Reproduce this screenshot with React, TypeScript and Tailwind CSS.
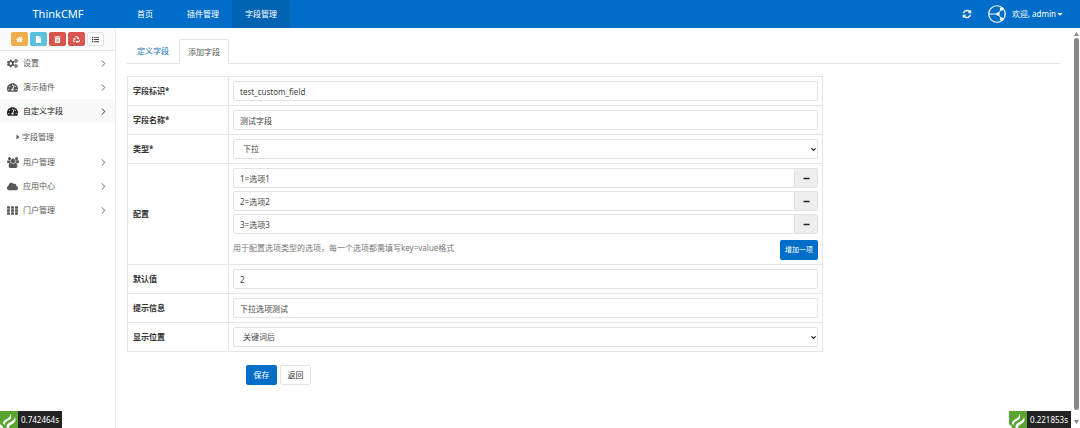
import { useState } from "react"
import type { ReactNode } from "react"
import {
  FaCaretDown,
  FaCaretRight,
  FaCloud,
  FaCogs,
  FaFile,
  FaHome,
  FaList,
  FaMinus,
  FaRecycle,
  FaTachometerAlt,
  FaTrashAlt,
} from "react-icons/fa"
import { ChevronDown, ChevronRight } from "lucide-react"

const navItems = ["首页", "插件管理", "字段管理"]

const shortcuts = [
  { label: "网站首页", icon: <FaHome />, style: "border-[#f0ad4e] bg-[#f0ad4e] text-white" },
  { label: "文章", icon: <FaFile />, style: "border-[#5bc0de] bg-[#5bc0de] text-white" },
  { label: "清除缓存", icon: <FaTrashAlt />, style: "border-[#d9534f] bg-[#d9534f] text-white" },
  { label: "回收站", icon: <FaRecycle />, style: "border-[#d9534f] bg-[#d9534f] text-white" },
  { label: "列表", icon: <FaList />, style: "border-[#e4e4e4] bg-white text-[#333]" },
]

const inputClass =
  "h-5 w-full min-w-0 rounded-[2px] border border-[#e2e2e2] bg-white px-1.5 text-[8px] text-[#444] outline-none focus:border-[#66afe9]"

function UsersIcon() {
  return (
    <svg viewBox="0 0 1920 1792" fill="currentColor" className="h-[11px] w-3">
      <path d="M593 896q-162 5-265 128h-134q-82 0-138-40.5t-56-118.5q0-353 124-353 6 0 43.5 21t97.5 42.5 119 21.5q67 0 133-23-5 37-5 66 0 159 92 288zm1071 637q0 120-73 189.5t-194 69.5h-874q-121 0-194-69.5t-73-189.5q0-53 3.5-103.5t14-109 26.5-108.5 43-97.5 62-81 85.5-53.5 111.5-20q10 0 43 21.5t73 48 107 48 135 21.5 135-21.5 107-48 73-48 43-21.5q61 0 111.5 20t85.5 53.5 62 81 43 97.5 26.5 108.5 14 109 3.5 103.5zm-1024-1277q0 106-75 181t-181 75-181-75-75-181 75-181 181-75 181 75 75 181zm704 384q0 159-112.5 271.5t-271.5 112.5-271.5-112.5-112.5-271.5 112.5-271.5 271.5-112.5 271.5 112.5 112.5 271.5zm576 225q0 78-56 118.5t-138 40.5h-134q-103-123-265-128 92-129 92-288 0-29-5-66 66 23 133 23 59 0 119-21.5t97.5-42.5 43.5-21q124 0 124 353zm-128-609q0 106-75 181t-181 75-181-75-75-181 75-181 181-75 181 75 75 181z" />
    </svg>
  )
}

function GridIcon() {
  return (
    <svg viewBox="0 0 22 17" fill="currentColor" className="h-[9px] w-[11px]">
      {[0, 6, 12].map((y) =>
        [0, 8, 16].map((x) => <rect key={`${x}-${y}`} x={x} y={y} width="6" height="5" rx="1" />)
      )}
    </svg>
  )
}

function RefreshIcon() {
  return (
    <svg viewBox="0 0 1792 1792" fill="currentColor" className="size-[10px]">
      <path d="M1639 1056q0 5-1 7-64 268-268 434.5t-478 166.5q-146 0-282.5-55t-243.5-157l-129 129q-19 19-45 19t-45-19-19-45v-448q0-26 19-45t45-19h448q26 0 45 19t19 45-19 45l-137 137q71 66 161 102t187 36q134 0 250-65t186-179q11-17 53-117 8-23 30-23h192q13 0 22.5 9.5t9.5 22.5zm25-800v448q0 26-19 45t-45 19h-448q-26 0-45-19t-19-45 19-45l138-138q-148-137-349-137-134 0-250 65t-186 179q-11 17-53 117-8 23-30 23h-199q-13 0-22.5-9.5t-9.5-22.5v-7q65-268 270-434.5t480-166.5q146 0 284 55.5t245 156.5l130-129q19-19 45-19t45 19 19 45z" />
    </svg>
  )
}

function AvatarIcon() {
  return (
    <svg viewBox="0 0 36 36" fill="none" stroke="currentColor" className="size-[18px]">
      <circle cx="18" cy="18" r="16.5" strokeWidth="2.4" />
      <path d="M2 18h18M20 18l7-10M20 18l7 10" strokeWidth="2" />
      <circle cx="20" cy="18" r="3.4" fill="currentColor" stroke="none" />
      <circle cx="27" cy="8" r="3.4" fill="currentColor" stroke="none" />
      <circle cx="27" cy="28" r="3.4" fill="currentColor" stroke="none" />
    </svg>
  )
}

function TraceBadge({ time }: { time: string }) {
  return (
    <button type="button" className="flex h-[17px] items-stretch bg-[#232323] text-[8px] text-white">
      <svg viewBox="0 0 36 34" className="h-[17px] w-[18px] bg-[#5aa532]">
        <path d="M6 23c3-7 14-7 15-17 5 9-3 12-8 15-3 2-4 4-3 7-3-1-4-3-4-5z" fill="#fff" />
        <path d="M13 30c2-8 15-8 17-18 4 10-4 13-9 16-2 1-3 3-3 6h-4c-1-1-1-3-1-4z" fill="#fff" />
        <path d="M0 27c3 0 6 3 6 7H0z" fill="#fff" />
      </svg>
      <span className="px-[3px] leading-[17px]">{time}</span>
    </button>
  )
}

function MenuItem({ icon, label, active }: { icon: ReactNode; label: string; active?: boolean }) {
  return (
    <li>
      <a
        href="#"
        className={`flex h-6 items-center pr-1.5 pl-[7px] ${active ? "bg-[#f9f9f9] text-[#222]" : "text-[#585858]"}`}
      >
        <span className="flex w-4 text-[11px]">{icon}</span>
        <span className="grow">{label}</span>
        <ChevronRight className="size-[11px]" strokeWidth={2} />
      </a>
    </li>
  )
}

function Field({ id, label, children }: { id: string; label: string; children: ReactNode }) {
  return (
    <tr>
      <th scope="row" className="w-[101px] border border-[#e5e5e5] px-[5px] text-left font-bold text-[#333]">
        <label htmlFor={id}>{label}</label>
      </th>
      <td className="border border-[#e5e5e5] p-1">{children}</td>
    </tr>
  )
}

function Select({ id, options }: { id: string; options: string[] }) {
  return (
    <div className="relative">
      <select id={id} className={`${inputClass} block appearance-none pl-[9px]`}>
        {options.map((option) => (
          <option key={option}>{option}</option>
        ))}
      </select>
      <ChevronDown className="pointer-events-none absolute top-[7px] right-px size-[7px] text-[#222]" strokeWidth={4} />
    </div>
  )
}

export default function App() {
  const [options, setOptions] = useState(["1=选项1", "2=选项2", "3=选项3"])

  return (
    <div className="flex min-h-screen flex-col bg-white font-['Noto_Sans','Noto_Sans_CJK_SC',sans-serif] text-[8px] leading-3 text-[#333]">
      {/* Top bar */}
      <header className="flex h-7 items-center bg-[#006ec8] text-white">
        <a href="#" className="w-[116px] text-center text-[11px]">
          ThinkCMF
        </a>
        <nav className="flex grow self-stretch">
          {navItems.map((item, i) => (
            <a
              key={item}
              href="#"
              className={`flex w-[58px] items-center justify-center ${i === 2 ? "bg-[#0062b3]" : ""}`}
            >
              {item}
            </a>
          ))}
        </nav>
        <button type="button" aria-label="刷新" className="mr-4">
          <RefreshIcon />
        </button>
        <button type="button" className="mr-4 flex items-center">
          <AvatarIcon />
          <span className="ml-1.5">欢迎, admin</span>
          <FaCaretDown className="size-2" />
        </button>
      </header>

      <div className="flex grow">
        {/* Sidebar */}
        <aside className="w-[116px] shrink-0 border-r border-[#eee]">
          <div className="flex h-[23px] items-center gap-0.5 border-b border-[#e5e5e5] bg-[#fafafa] pl-[11px]">
            {shortcuts.map((item) => (
              <button
                key={item.label}
                type="button"
                aria-label={item.label}
                className={`flex h-3.5 w-[17px] items-center justify-center rounded-[2px] border text-[7px] ${item.style}`}
              >
                {item.icon}
              </button>
            ))}
          </div>
          <ul>
            <MenuItem icon={<FaCogs />} label="设置" />
            <MenuItem icon={<FaTachometerAlt />} label="演示插件" />
            <MenuItem icon={<FaTachometerAlt />} label="自定义字段" active />
            <li>
              <a href="#" className="flex h-[27px] items-center pl-3.5 text-[#585858]">
                <FaCaretRight className="size-2" />
                字段管理
              </a>
            </li>
            <MenuItem icon={<UsersIcon />} label="用户管理" />
            <MenuItem icon={<FaCloud />} label="应用中心" />
            <MenuItem icon={<GridIcon />} label="门户管理" />
          </ul>
        </aside>

        <main className="min-w-0 grow pt-[11px] pr-3 pl-[11px]">
          {/* Tabs */}
          <div className="flex border-b border-[#e2e2e2]">
            <a href="#" className="px-2.5 py-1.5 text-[#1a75bb]">
              定义字段
            </a>
            <a
              href="#"
              className="-mb-px rounded-t-[2px] border border-b-0 border-[#e2e2e2] bg-white px-2 py-1.5 text-[#555]"
            >
              添加字段
            </a>
          </div>

          <form className="mt-3 max-w-[696px]" onSubmit={(e) => e.preventDefault()}>
            <table className="w-full table-fixed border-collapse">
              <tbody>
                <Field id="key" label="字段标识*">
                  <input id="key" type="text" defaultValue="test_custom_field" className={`${inputClass} block`} />
                </Field>
                <Field id="name" label="字段名称*">
                  <input id="name" type="text" defaultValue="测试字段" className={`${inputClass} block`} />
                </Field>
                <Field id="type" label="类型*">
                  <Select id="type" options={["下拉", "文本", "单选"]} />
                </Field>
                <Field id="option-0" label="配置">
                  <div className="flex flex-col gap-[3px]">
                    {options.map((option, i) => (
                      <div key={i} className="flex">
                        <input
                          id={`option-${i}`}
                          aria-label={`配置 ${i + 1}`}
                          type="text"
                          value={option}
                          onChange={(e) => setOptions(options.map((o, n) => (n === i ? e.target.value : o)))}
                          className={`${inputClass} rounded-r-none`}
                        />
                        <button
                          type="button"
                          aria-label="删除"
                          onClick={() => setOptions(options.filter((_, n) => n !== i))}
                          className="flex h-5 w-[23px] shrink-0 items-center justify-center rounded-r-[2px] border border-l-0 border-[#e2e2e2] bg-[#eee] text-[#222]"
                        >
                          <FaMinus className="size-[7px]" />
                        </button>
                      </div>
                    ))}
                  </div>
                  <div className="mt-1.5 flex items-start justify-between">
                    <p className="py-0.5 text-[#777]">用于配置选项类型的选项，每一个选项都需填写key=value格式</p>
                    <button
                      type="button"
                      onClick={() => setOptions([...options, ""])}
                      className="h-5 w-[38px] rounded-[2px] bg-[#006ec8] text-[7px] text-white"
                    >
                      增加一项
                    </button>
                  </div>
                </Field>
                <Field id="default" label="默认值">
                  <input id="default" type="text" defaultValue="2" className={`${inputClass} block`} />
                </Field>
                <Field id="tip" label="提示信息">
                  <input id="tip" type="text" defaultValue="下拉选项测试" className={`${inputClass} block`} />
                </Field>
                <Field id="position" label="显示位置">
                  <Select id="position" options={["关键词后", "标题后", "内容后"]} />
                </Field>
              </tbody>
            </table>

            <div className="mt-[13px] flex gap-[3px] pl-[119px]">
              <button type="submit" className="h-5 w-[31px] rounded-[2px] bg-[#006ec8] text-white">
                保存
              </button>
              <a href="#" className="h-5 w-[31px] rounded-[2px] border border-[#e2e2e2] text-center leading-[18px]">
                返回
              </a>
            </div>
          </form>
        </main>

        {/* Scroll track of the content frame */}
        <div className="flex w-2 shrink-0 flex-col items-center gap-0.5 py-1 text-[#888]" aria-hidden="true">
          <svg viewBox="0 0 10 8" fill="currentColor" className="h-1 w-[5px]">
            <path d="M5 0l5 8H0z" />
          </svg>
          <div className="w-[5px] grow rounded-full bg-[#888]" />
          <svg viewBox="0 0 10 8" fill="currentColor" className="mt-2 h-1 w-[5px]">
            <path d="M0 0h10L5 8z" />
          </svg>
        </div>
      </div>

      {/* Page render times */}
      <div className="fixed bottom-0 left-0">
        <TraceBadge time="0.742464s" />
      </div>
      <div className="fixed right-[9px] bottom-0">
        <TraceBadge time="0.221853s" />
      </div>
    </div>
  )
}
